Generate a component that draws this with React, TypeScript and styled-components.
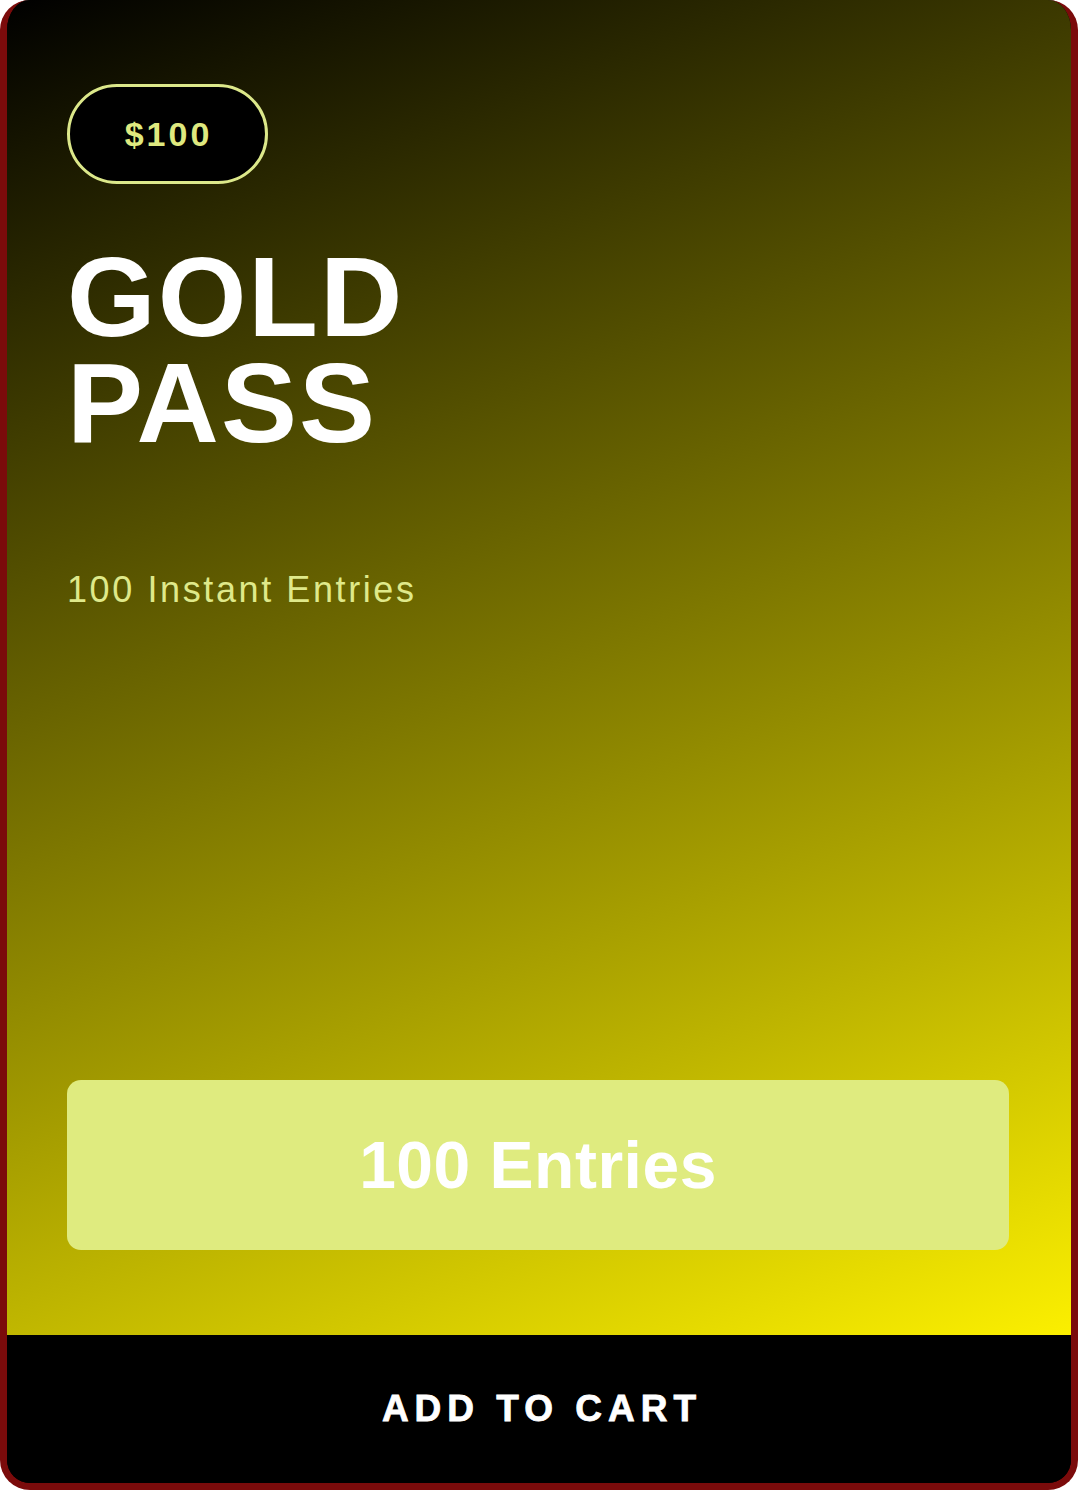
import styled, { createGlobalStyle } from "styled-components";

const GlobalStyle = createGlobalStyle`
  html, body {
    margin: 0;
    padding: 0;
    background: #ffffff;
  }
  body {
    font-family: "Liberation Sans", Arial, sans-serif;
  }
`;

const Card = styled.div`
  width: 1078px;
  height: 1490px;
  box-sizing: border-box;
  border: 7px solid #7b0b0b;
  border-top: 0;
  border-radius: 30px;
  overflow: hidden;
  display: flex;
  flex-direction: column;
  background: #000;
`;

const Body = styled.div`
  height: 1335px;
  box-sizing: border-box;
  padding: 84px 62px 85px 60px;
  display: flex;
  flex-direction: column;
  background: linear-gradient(159deg, #000000 0%, #fbef00 100%);
`;

const PricePill = styled.div`
  width: 201px;
  height: 100px;
  box-sizing: border-box;
  border: 3px solid #dce88a;
  border-radius: 50px;
  background: #000;
  color: #dfe97f;
  font-size: 34px;
  font-weight: 700;
  letter-spacing: 3px;
  display: flex;
  align-items: center;
  justify-content: center;
  padding-left: 2px;
`;

const Title = styled.h1`
  margin: 60px 0 0;
  color: #ffffff;
  font-size: 114px;
  line-height: 106px;
  font-weight: 700;
  letter-spacing: 2px;
`;

const TitleLine = styled.span`
  display: block;
`;

const Subtitle = styled.p`
  margin: 112px 0 0;
  color: #dfe98a;
  font-size: 36px;
  line-height: 44px;
  letter-spacing: 2.6px;
`;

const EntriesBox = styled.div`
  margin-top: auto;
  height: 170px;
  border-radius: 14px;
  background: #dfeb7f;
  color: #ffffff;
  font-size: 66px;
  font-weight: 700;
  letter-spacing: 0.5px;
  display: flex;
  align-items: center;
  justify-content: center;
`;

const CartBar = styled.button`
  flex: 1;
  border: 0;
  background: #000;
  color: #ffffff;
  font-family: "Liberation Sans", Arial, sans-serif;
  font-size: 37px;
  font-weight: 700;
  letter-spacing: 6px;
  -webkit-text-stroke: 0.8px #ffffff;
  cursor: pointer;
  display: flex;
  align-items: center;
  justify-content: center;
  padding: 0 0 0 6px;
`;

export default function App() {
  return (
    <>
      <GlobalStyle />
      <Card>
        <Body>
          <PricePill>$100</PricePill>
          <Title>
            <TitleLine>GOLD</TitleLine>
            <TitleLine>PASS</TitleLine>
          </Title>
          <Subtitle>100 Instant Entries</Subtitle>
          <EntriesBox>100 Entries</EntriesBox>
        </Body>
        <CartBar>ADD TO CART</CartBar>
      </Card>
    </>
  );
}
